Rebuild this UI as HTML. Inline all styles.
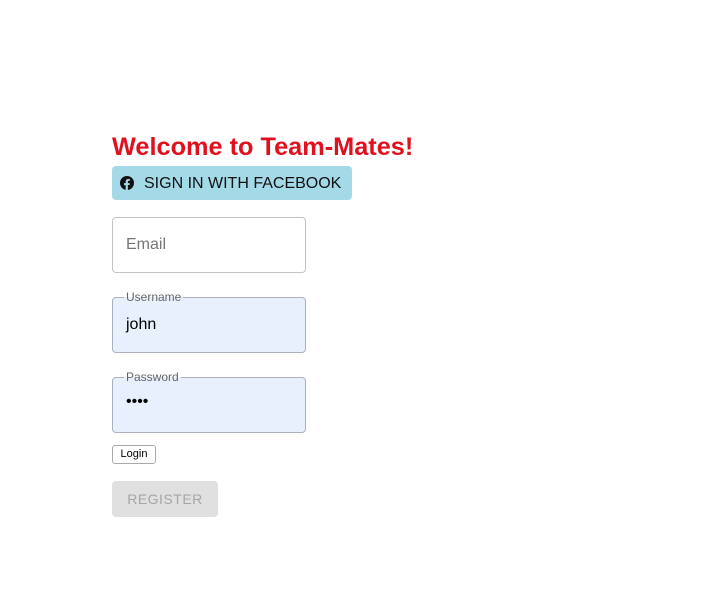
<!DOCTYPE html>
<html><head><style>
body{margin:0;width:725px;height:599px;background:#fff;font-family:"Liberation Sans",Arial,sans-serif;position:relative;overflow:hidden}
.a{position:absolute}
h1{position:absolute;left:112px;top:131px;margin:0;font-size:25.3px;font-weight:bold;color:#e0101e;line-height:32px}
.fb{left:112px;top:166px;width:240px;height:34px;background:#a4d9e8;border-radius:4px;font-size:16px;color:#111;line-height:34px}
.box{left:112px;width:192px;height:54px;border:1px solid #c4c4c4;border-radius:4px}
.fill{background:#e8f0fe;border-color:#aab0bf}
.lbl{font-size:12px;color:#666;background:#fff;padding:0 2px;line-height:12px}
</style></head><body>
<h1>Welcome to Team-Mates!</h1>
<div class="a fb">
<svg class="a" style="left:8px;top:10px" width="14" height="14" viewBox="0 0 24 24"><circle cx="12" cy="12" r="12" fill="#111"/><path d="M13.5 24v-8.5h2.8l.5-3.3h-3.3V10c0-.9.4-1.8 1.9-1.8h1.5V5.4s-1.4-.2-2.7-.2c-2.7 0-4.5 1.6-4.5 4.6v2.5H6.8v3.3h2.9V24z" fill="#a4d9e8"/></svg>
<span class="a" style="left:32px;top:1px">SIGN IN WITH FACEBOOK</span></div>
<div class="a box" style="top:217px"></div>
<div class="a" style="left:126px;top:236px;font-size:16px;color:#757575">Email</div>
<div class="a box fill" style="top:297px;height:54px"></div>
<div class="a lbl" style="left:124px;top:291px;background:linear-gradient(#fff 50%,#e8f0fe 50%)">Username</div>
<div class="a" style="left:126px;top:316px;font-size:16px;color:#000">john</div>
<div class="a box fill" style="top:377px;height:54px"></div>
<div class="a lbl" style="left:124px;top:371px;background:linear-gradient(#fff 50%,#e8f0fe 50%)">Password</div>
<div class="a" style="left:126px;top:393px;font-size:16px;color:#000;letter-spacing:0px">••••</div>
<div class="a" style="left:112px;top:445px;width:42px;height:17px;border:1px solid #aaa;border-radius:3px;font-size:11px;line-height:17px;text-align:center;color:#000">Login</div>
<div class="a" style="left:112px;top:481px;width:106px;height:36px;background:#e0e0e0;border-radius:4px;color:#a6a6a6;font-size:14px;line-height:36px;text-align:center;letter-spacing:.5px">REGISTER</div>
</body></html>
